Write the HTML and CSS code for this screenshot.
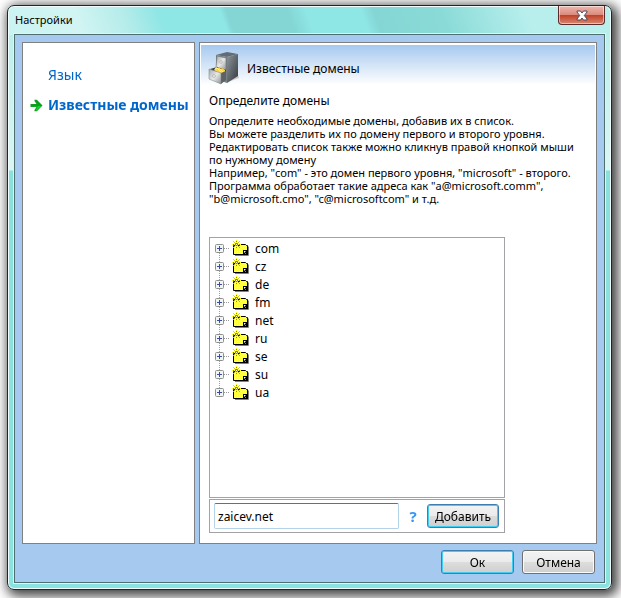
FILE: index.html
```
<!DOCTYPE html>
<html lang="ru">
<head>
  <meta charset="UTF-8">
  <meta name="viewport" content="width=device-width, initial-scale=1.0">
  <title>Настройки</title>
  <link rel="stylesheet" href="styles.css">
</head>
<body>

  <svg class="sprite" aria-hidden="true">
    <symbol id="expander" viewBox="0 0 16 18">
      <path d="M9 9.5h5" stroke="#999" stroke-dasharray="1 1"/>
      <rect x="0.5" y="5.5" width="8" height="8" rx="1" fill="#f4f4f4" stroke="#8f8f8f"/>
      <path d="M2 9.5h5M4.500 7v5" stroke="#35509c"/>
    </symbol>
    <symbol id="domain" viewBox="0 0 17 16">
      <path d="M3 15.500h13.500v-9" fill="none" stroke="#808080"/>
      <path d="M1.500 5.500h6l1-1h5l1 1h1v9h-14z" fill="#ffff3a" stroke="#000"/>
      <path d="M3 7.500h11M3 9.500h8M3 11.500h8M3 13.500h8" stroke="#fffff0" stroke-dasharray="1 1"/>
      <rect x="11" y="10" width="5" height="5" fill="#000"/>
      <path d="M12 13v-2h2zM13 14l1-1v1z" fill="#fff"/>
      <path d="M4.500 0v9M0 4.500h9M1 1l7 7M8 1L1 8" stroke="#7d7d55"/>
      <path d="M4.500 0v9M0 4.500h9M1 1l7 7M8 1L1 8" stroke="#ffff1a" stroke-dasharray="1 1"/>
      <rect x="4" y="4" width="1" height="1" fill="#fff"/>
    </symbol>
  </svg>

  <div class="window">
    <header class="titlebar">
      <span class="window-title">Настройки</span>
      <button class="close" type="button" aria-label="Закрыть">
        <svg width="12" height="11" viewBox="0 0 12 11">
          <path d="M1 1h3.500L6 3l1.500-2H11v1L8.300 5.500 11 9v1H7.500L6 8l-1.500 2H1V9l2.700-3.500L1 2z" fill="#fff" stroke="#4b4c5e"/>
        </svg>
      </button>
    </header>

    <div class="client">
      <div class="panels">
        <nav class="sidebar">
          <a class="nav-link" href="#language">Язык</a>
          <a class="nav-link active" href="#domains">
            <svg class="arrow" width="13" height="13" viewBox="0 0 13 13">
              <path d="M0.500 5h6L4.500 2V0.800h2.300L12.500 6.500 6.800 12.200H4.500V11l2-3h-6z" fill="#0c9e1c"/>
              <path d="M1 7.500h7L5.300 11.600h1.200L11.500 6.700z" fill="#12d332"/>
            </svg>
            Известные домены
          </a>
        </nav>

        <main class="content">
          <div class="content-head">
            <svg width="32" height="34" viewBox="0 0 32 34">
              <defs>
                <linearGradient id="side" x1="0" y1="0" x2="1" y2="1">
                  <stop offset="0" stop-color="#8c959b"/>
                  <stop offset="1" stop-color="#343a3e"/>
                </linearGradient>
                <linearGradient id="front" x1="0" y1="0" x2="1" y2="1">
                  <stop offset="0" stop-color="#a5a9aa"/>
                  <stop offset="0.500" stop-color="#e8e9e7"/>
                  <stop offset="1" stop-color="#8d9293"/>
                </linearGradient>
              </defs>
              <path d="M17 32l14-5-1-3z" fill="#c9cbc8"/>
              <path d="M8 4l11-3 11 2-11 3z" fill="#626c72"/>
              <path d="M19 6l11-3v22l-11 7z" fill="url(#side)"/>
              <path d="M8 4l11 2v26L8 28z" fill="#798185"/>
              <path d="M9 5l9 2v12L8 16z" fill="url(#front)" stroke="#62696c" stroke-width="0.500"/>
              <circle cx="13" cy="11" r="1.300" fill="#f5f5f5" stroke="#858a8c" stroke-width="0.500"/>
              <path d="M2 18l7-2 9 3v3l-5 3z" fill="#404648"/>
              <path d="M6 19l2-3 2 1 1-1 2 2 1-1 3 2v5l-5 1z" fill="#ffd34b"/>
              <path d="M7 18l2-1 4 4M12 18l3 3" fill="none" stroke="#fff2a0"/>
              <path d="M13 22l5-2v9l-5 4z" fill="#5c6365"/>
              <path d="M1 18l12 4v11L1 28z" fill="url(#front)" stroke="#777d7f" stroke-width="0.500"/>
              <circle cx="6" cy="25" r="1.400" fill="#f5f5f5" stroke="#858a8c" stroke-width="0.500"/>
            </svg>
            <h1>Известные домены</h1>
          </div>

          <div class="content-body">
            <h2>Определите домены</h2>
            <p class="description">
              Определите необходимые домены, добавив их в список.<br>
              Вы можете разделить их по домену первого и второго уровня.<br>
              Редактировать список также можно кликнув правой кнопкой мыши<br>
              по нужному домену<br>
              Например, "com" - это домен первого уровня, "microsoft" - второго.<br>
              Программа обработает такие адреса как "a@microsoft.comm",<br>
              "b@microsoft.cmo", "c@microsoftcom" и т.д.
            </p>

            <div class="domains">
              <ul class="tree">
                <li><svg class="expander"><use href="#expander"/></svg><svg class="domain"><use href="#domain"/></svg>com</li>
                <li><svg class="expander"><use href="#expander"/></svg><svg class="domain"><use href="#domain"/></svg>cz</li>
                <li><svg class="expander"><use href="#expander"/></svg><svg class="domain"><use href="#domain"/></svg>de</li>
                <li><svg class="expander"><use href="#expander"/></svg><svg class="domain"><use href="#domain"/></svg>fm</li>
                <li><svg class="expander"><use href="#expander"/></svg><svg class="domain"><use href="#domain"/></svg>net</li>
                <li><svg class="expander"><use href="#expander"/></svg><svg class="domain"><use href="#domain"/></svg>ru</li>
                <li><svg class="expander"><use href="#expander"/></svg><svg class="domain"><use href="#domain"/></svg>se</li>
                <li><svg class="expander"><use href="#expander"/></svg><svg class="domain"><use href="#domain"/></svg>su</li>
                <li><svg class="expander"><use href="#expander"/></svg><svg class="domain"><use href="#domain"/></svg>ua</li>
              </ul>
              <form class="add-row">
                <input class="add-input" type="text" value="zaicev.net" aria-label="Домен" autofocus>
                <a class="help" href="#help">?</a>
                <button class="btn btn-add default" type="button">Добавить</button>
              </form>
            </div>
          </div>
        </main>
      </div>

      <footer class="actions">
        <button class="btn default" type="button">Ок</button>
        <button class="btn cancel" type="button">Отмена</button>
      </footer>
    </div>
  </div>

  <script>
    // Put the caret after the text
    const input = document.querySelector(".add-input");
    input.focus();
    input.setSelectionRange(input.value.length, input.value.length);
  </script>

</body>
</html>
```
FILE: styles.css
```
* {
  box-sizing: border-box;
}

body {
  font-family: "Noto Sans", "Open Sans", sans-serif;
  font-size: 12px;
  color: #000;
  background: #fff;
  margin: 0;
  padding: 5px 9px 8px 7px;
  min-height: 100vh;
  display: flex;
  overflow: hidden;
}

h1, h2, p, ul {
  margin: 0;
  padding: 0;
  font-size: 12px;
  font-weight: normal;
}

.sprite {
  position: absolute;
  width: 0;
  height: 0;
}

.window {
  flex: 1;
  display: flex;
  flex-direction: column;
  padding: 0 6px 6px;
  border: 1px solid #1c2828;
  border-radius: 7px;
  background:
    linear-gradient(70deg, #c9f3f1 0, #d2f5f3 12%, #b5ecea 20%, #8ee6e5 26%, #8ee6e5 36%, #84d6d4 37%, #84d6d4 47%, #8ee6e5 50%, #8ee6e5 59%, #84d6d4 61%, #8adbd8 72%, #b8efed 86%, #b8efed 100%) top / 100% 29px no-repeat,
    linear-gradient(#b5eeeb 0, #d9f6f4 164px, #8ae0dd 165px, #8ae3e0 100%);
  box-shadow: inset 0 0 0 1px #effdfc, 3px 3px 12px 3px rgba(0, 0, 0, 0.75);
}

.titlebar {
  display: flex;
  justify-content: space-between;
  align-items: flex-start;
  height: 28px;
  padding-left: 1px;
}

.window-title {
  line-height: 28px;
  font-size: 11px;
}

.close {
  display: flex;
  align-items: center;
  justify-content: center;
  width: 47px;
  height: 19px;
  padding: 0;
  border: 1px solid #5c2a2a;
  border-top: 0;
  border-radius: 0 0 4px 4px;
  background: linear-gradient(#eeb8ae 0, #dc8a7c 48%, #bf3f24 50%, #d88672 100%);
  box-shadow: inset 0 0 0 1px rgba(255, 255, 255, 0.5);
}

.client {
  flex: 1;
  display: flex;
  flex-direction: column;
  padding: 7px;
  border: 1px solid #4e6e70;
  outline: 1px solid #d8f8f6;
  background: #a6c9ef;
}

.panels {
  flex: 1;
  display: flex;
  gap: 4px;
}

.sidebar,
.content {
  border: 1px solid #808080;
  background: #fff;
}

.sidebar {
  display: flex;
  flex-direction: column;
  gap: 10px;
  width: 173px;
  padding: 22px 0 0 25px;
}

.nav-link {
  position: relative;
  color: #0066cc;
  font-size: 14px;
  line-height: 20px;
  text-decoration: none;
  white-space: nowrap;
}

.nav-link.active {
  font-weight: bold;
}

.arrow {
  position: absolute;
  left: -18px;
  top: 4px;
}

.content {
  flex: 1;
  padding: 2px 1px;
}

.content-head {
  display: flex;
  align-items: center;
  gap: 7px;
  height: 46px;
  padding: 0 7px;
  background: linear-gradient(#a6c9ef 0, #fff 40px);
}

.content-body {
  padding: 2px 8px;
}

.content-body h2 {
  line-height: 16px;
}

.description {
  padding-top: 5px;
  font-size: 11px;
  line-height: 13px;
  white-space: nowrap;
}

.domains {
  max-width: 296px;
  margin-top: 32px;
}

.tree {
  min-height: 261px;
  padding: 1px 5px;
  border: 1px solid #a3a3a7;
  list-style: none;
}

.tree li {
  display: flex;
  align-items: center;
  height: 18px;
  background: repeating-linear-gradient(#a0a0a0 0 1px, transparent 1px 2px) 4px 0 / 1px 100% no-repeat;
}

.tree li:first-child {
  background-position: 4px 10px;
}

.tree li:last-child {
  background-size: 1px 8px;
}

.expander {
  width: 16px;
  height: 18px;
}

.domain {
  width: 17px;
  height: 16px;
  margin: 0 6px 0 1px;
}

.add-row {
  display: flex;
  align-items: center;
  height: 34px;
  margin-top: 1px;
  padding: 0 5px 0 4px;
  border: 1px solid #a3a3a7;
}

.add-input {
  flex: 1;
  min-width: 0;
  height: 26px;
  padding: 0 3px;
  border: 1px solid #b5d3e8;
  border-top-color: #3d7bad;
  border-radius: 2px;
  font: inherit;
  outline: none;
}

.help {
  width: 28px;
  color: #3a95f5;
  font-size: 15px;
  font-weight: bold;
  line-height: 20px;
  text-align: center;
  text-decoration: none;
}

.btn {
  width: 73px;
  height: 24px;
  padding: 0;
  border: 1px solid #707070;
  border-radius: 3px;
  background: linear-gradient(#f3f3f3 0, #ebebeb 48%, #dddddd 50%, #cfcfcf 100%);
  box-shadow: inset 0 0 0 1px #fafafa;
  font: inherit;
}

.btn.default {
  border-color: #3c7fb1;
  box-shadow: inset 0 0 0 1px #42cdf3;
}

.btn-add {
  width: 72px;
}

.actions {
  display: flex;
  justify-content: flex-end;
  gap: 8px;
  height: 31px;
  padding: 6px 2px 0;
}
```
